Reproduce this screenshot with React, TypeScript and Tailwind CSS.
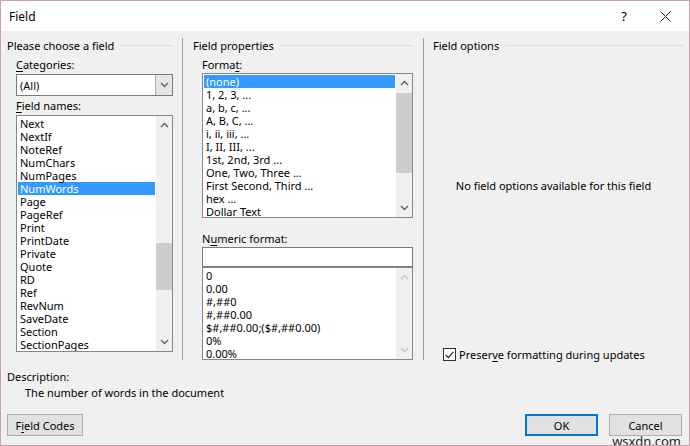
import React from "react";

const fieldNames = [
  "Next",
  "NextIf",
  "NoteRef",
  "NumChars",
  "NumPages",
  "NumWords",
  "Page",
  "PageRef",
  "Print",
  "PrintDate",
  "Private",
  "Quote",
  "RD",
  "Ref",
  "RevNum",
  "SaveDate",
  "Section",
  "SectionPages",
];

const formats = [
  "(none)",
  "1, 2, 3, ...",
  "a, b, c, ...",
  "A, B, C, ...",
  "i, ii, iii, ...",
  "I, II, III, ...",
  "1st, 2nd, 3rd ...",
  "One, Two, Three ...",
  "First Second, Third ...",
  "hex ...",
  "Dollar Text",
];

const numeric = ["0", "0.00", "#,##0", "#,##0.00", "$#,##0.00;($#,##0.00)", "0%", "0.00%"];

function Chevron({ up, disabled }: { up?: boolean; disabled?: boolean }) {
  return (
    <svg width="9" height="6" viewBox="0 0 9 6" className="block">
      <path
        d={up ? "M1 5 L4.5 1.5 L8 5" : "M1 1 L4.5 4.5 L8 1"}
        fill="none"
        stroke={disabled ? "#c4c4c4" : "#606060"}
        strokeWidth="1.4"
      />
    </svg>
  );
}

function GroupHeader({ title }: { title: string }) {
  return (
    <div className="flex h-[14px] items-center gap-[6px]">
      <span className="whitespace-nowrap">{title}</span>
      <div className="h-px flex-1 bg-[#dcdcdc]" />
    </div>
  );
}

function U({ children }: { children: React.ReactNode }) {
  return <span className="underline underline-offset-2">{children}</span>;
}

function ListBox({
  items,
  selected,
  height,
  thumbTop,
  thumbHeight,
  disabled,
  padTop = 1,
}: {
  items: string[];
  selected?: number;
  height: number;
  thumbTop?: number;
  thumbHeight?: number;
  disabled?: boolean;
  padTop?: number;
}) {
  return (
    <div className="flex border border-[#828790] bg-white" style={{ height }}>
      <div className="flex-1 overflow-hidden px-px" style={{ paddingTop: padTop }}>
        {items.map((it, i) => (
          <div
            key={it}
            className={
              "h-[13px] whitespace-nowrap pl-[2px] leading-[13px] " +
              (i === selected ? "bg-[#3399ff] text-white" : "")
            }
          >
            {it}
          </div>
        ))}
      </div>
      <div className="relative flex w-[16px] flex-col items-center justify-between bg-[#f0f0f0] py-[6px]">
        <Chevron up disabled={disabled} />
        {thumbHeight ? (
          <div
            className="absolute left-0 w-[16px] bg-[#cdcdcd]"
            style={{ top: thumbTop, height: thumbHeight }}
          />
        ) : null}
        <Chevron disabled={disabled} />
      </div>
    </div>
  );
}

function Button({
  children,
  primary,
  className,
}: {
  children: React.ReactNode;
  primary?: boolean;
  className?: string;
}) {
  return (
    <div
      className={
        "flex h-[22px] items-center justify-center bg-[#e1e1e1] " +
        (primary ? "border-2 border-[#0078d7]" : "border border-[#adadad]") +
        " " +
        (className ?? "")
      }
    >
      {children}
    </div>
  );
}

export default function App() {
  return (
    <div
      className="relative h-[446px] w-[690px] overflow-hidden border border-[#c9a3a8] bg-[#f0f0f0] text-[11px] leading-[13px] text-black"
      style={{ fontFamily: '"Noto Sans", "Open Sans", sans-serif' }}
    >
      {/* title bar */}
      <div className="flex h-[30px] items-center bg-white pl-[8px] pr-[12px]">
        <span className="flex-1 text-[12px]">Field</span>
        <span className="mr-[33px] text-[13px]">?</span>
        <svg width="11" height="11" viewBox="0 0 11 11" className="mr-[6px]">
          <path d="M0.5 0.5 L10.5 10.5 M10.5 0.5 L0.5 10.5" stroke="#222" strokeWidth="1" />
        </svg>
      </div>

      {/* columns */}
      <div className="flex h-[336px]">
        {/* left column */}
        <div className="w-[181px] pl-[6px] pr-[9px] pt-[7px]">
          <GroupHeader title="Please choose a field" />
          <div className="pl-[9px]">
            <div className="mt-[6px] h-[13px]">
              <U>C</U>ategories:
            </div>
            <div className="mt-[3px] flex h-[22px] border border-[#7a7a7a] bg-white">
              <div className="flex flex-1 items-center pl-[3px]">(All)</div>
              <div className="flex w-[17px] items-center justify-center border-l border-[#acacac] bg-[#e5e5e5]">
                <Chevron />
              </div>
            </div>
            <div className="mt-[3px] h-[13px]">
              <U>F</U>ield names:
            </div>
            <div className="mt-[3px]">
              <ListBox items={fieldNames} selected={5} height={237} thumbTop={127} thumbHeight={47} />
            </div>
          </div>
        </div>

        <div className="my-[7px] w-px bg-[#a0a0a0]" />

        {/* middle column */}
        <div className="w-[240px] pl-[10px] pr-[10px] pt-[7px]">
          <GroupHeader title="Field properties" />
          <div className="pl-[9px]">
            <div className="mt-[6px] h-[13px]">
              Forma<U>t</U>:
            </div>
            <div className="mt-[2px]">
              <ListBox items={formats} selected={0} height={145} thumbTop={19} thumbHeight={80} />
            </div>
            <div className="mt-[14px] h-[13px]">
              N<U>u</U>meric format:
            </div>
            <div className="mt-[2px] h-[20px] border border-[#7a7a7a] bg-white" />
            <ListBox items={numeric} height={93} disabled padTop={1} />
          </div>
        </div>

        <div className="my-[7px] w-px bg-[#a0a0a0]" />

        {/* right column */}
        <div className="flex flex-1 flex-col pl-[9px] pr-[5px] pt-[7px]">
          <GroupHeader title="Field options" />
          <div className="mt-[127px] pr-[10px] text-center">No field options available for this field</div>
          <div className="mt-[156px] flex items-center gap-[3px] pl-[10px]">
            <div className="flex h-[13px] w-[13px] items-center justify-center border border-[#333] bg-white">
              <svg width="9" height="8" viewBox="0 0 9 8">
                <path d="M0.8 4 L3.3 6.6 L8.3 0.8" fill="none" stroke="#222" strokeWidth="1.2" />
              </svg>
            </div>
            <span>
              Preser<U>v</U>e formatting during updates
            </span>
          </div>
        </div>
      </div>

      {/* bottom */}
      <div className="pl-[6px] pr-[7px]">
        <div className="mt-[3px] h-[13px]">Description:</div>
        <div className="mt-[3px] h-[13px] pl-[18px]">The number of words in the document</div>
        <div className="mt-[15px] flex items-center">
          <Button className="w-[76px]">
            F<U>i</U>eld Codes
          </Button>
          <div className="flex-1" />
          <Button primary className="w-[73px]">
            OK
          </Button>
          <Button className="ml-[11px] w-[73px]">Cancel</Button>
        </div>
      </div>

      <div
        className="absolute bottom-[-3px] right-[8px] text-[13px] text-[#222]"
        style={{ textShadow: "0 0 2px #fff, 0 0 2px #fff" }}
      >
        wsxdn.com
      </div>
    </div>
  );
}
